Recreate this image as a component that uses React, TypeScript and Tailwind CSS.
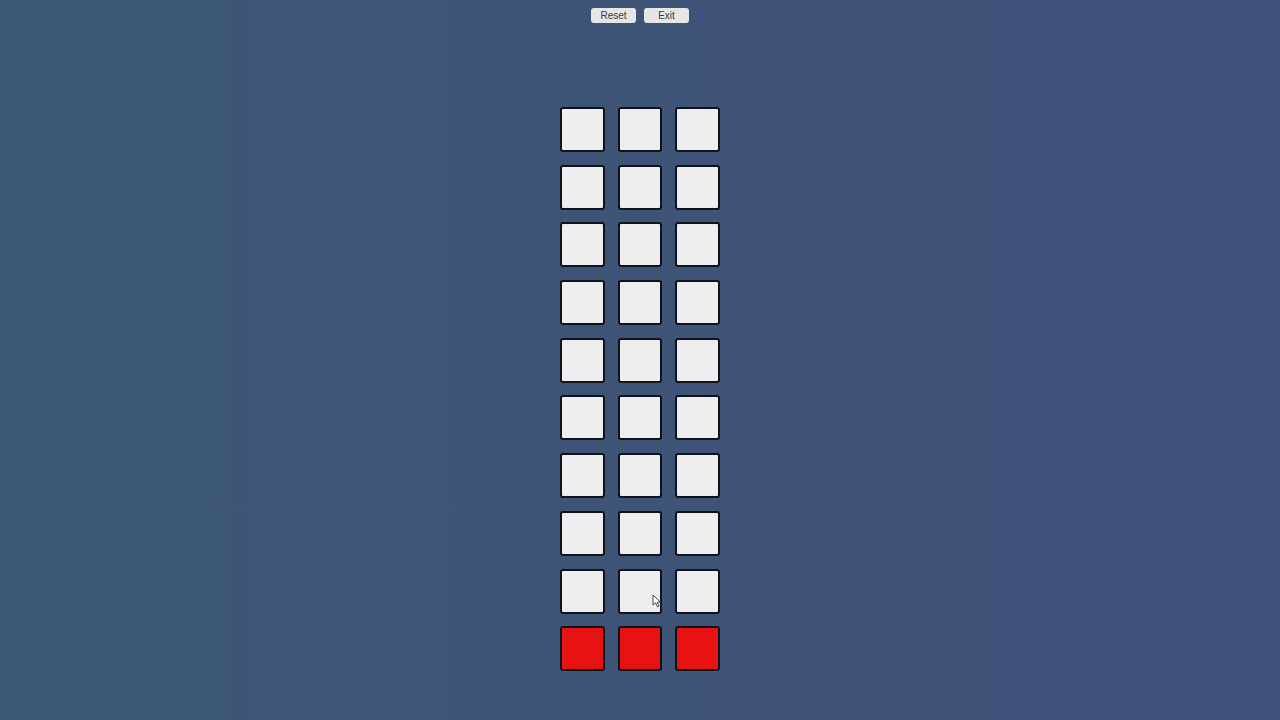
import React from "react";

const rows = 10;

export default function App() {
  const cells: { red: boolean; key: string }[] = [];
  for (let r = 0; r < rows; r++) {
    for (let c = 0; c < 3; c++) {
      cells.push({ red: r === rows - 1, key: `${r}-${c}` });
    }
  }
  return (
    <div
      className="relative w-[1280px] h-[720px] overflow-hidden bg-gradient-to-r from-[#3c5775] to-[#41517a]"
      style={{ fontFamily: '"Liberation Sans", Arial, sans-serif' }}
    >
      <div className="flex justify-center gap-[8px] pt-[8px]">
        <button className="w-[45px] h-[15px] rounded-[3px] bg-[#e6e6e6] text-[#3a3a3a] text-[10px] leading-[15px] flex items-center justify-center">
          Reset
        </button>
        <button className="w-[45px] h-[15px] rounded-[3px] bg-[#e6e6e6] text-[#3a3a3a] text-[10px] leading-[15px] flex items-center justify-center">
          Exit
        </button>
      </div>
      <div className="flex justify-center pt-[84px]">
        <div className="grid grid-cols-[repeat(3,44.5px)] gap-x-[13.2px] gap-y-[12.7px]">
          {cells.map((c) => (
            <div
              key={c.key}
              className={
                c.red
                  ? "w-[44.5px] h-[45px] rounded-[3px] border-2 border-[#0f131b] bg-[#e81212]"
                  : "w-[44.5px] h-[45px] rounded-[3px] border-2 border-[#0f131b] bg-[#eeeeee]"
              }
            />
          ))}
        </div>
      </div>
      <svg
        className="absolute left-[652px] top-[594px]"
        width="10"
        height="14"
        viewBox="0 0 10 14"
      >
        <path d="M1 1 L1 11 L3.5 8.8 L5.4 12.8 L7 12 L5.2 8.2 L8.5 8.2 Z" fill="#ffffff" stroke="#333" strokeWidth="0.9" strokeLinejoin="round" />
      </svg>
    </div>
  );
}
